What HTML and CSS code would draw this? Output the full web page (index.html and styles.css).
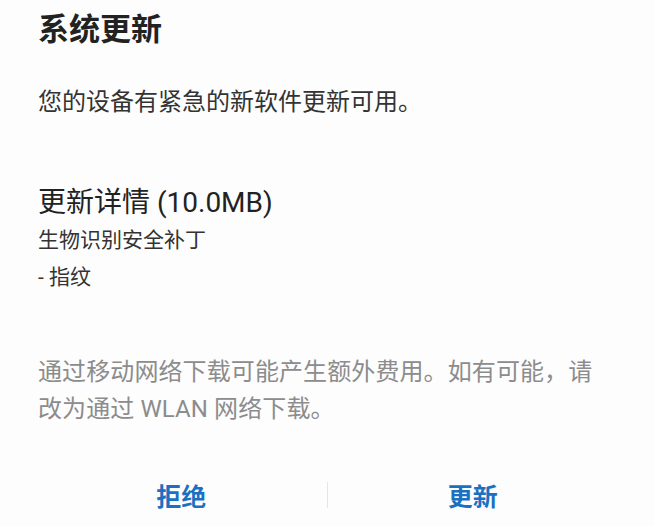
FILE: index.html
```html
<!DOCTYPE html>
<html lang="zh-CN">
<head>
  <meta charset="UTF-8">
  <title>系统更新</title>
  <link rel="stylesheet" href="styles.css">
</head>
<body>
  <div class="dialog">
    <h1 class="title">系统更新</h1>
    <p class="message">您的设备有紧急的新软件更新可用。</p>
    <h2 class="details">更新详情 (10.0MB)</h2>
    <div class="notes">
      <div>生物识别安全补丁</div>
      <div>- 指纹</div>
    </div>
    <p class="hint">通过移动网络下载可能产生额外费用。如有可能，请改为通过 WLAN 网络下载。</p>
    <div class="actions">
      <button class="btn">拒绝</button>
      <span class="sep"></span>
      <button class="btn">更新</button>
    </div>
  </div>
</body>
</html>
```

FILE: styles.css
```css
html, body { margin: 0; background: #fdfdfd; }
body { font-family: Roboto, "Noto Sans CJK SC", sans-serif; color: #333; }
.dialog { padding: 10px 48px 0 38px; }
.title { margin: 0; font-size: 31px; line-height: 40px; font-weight: 700; color: #222; }
.message { margin: 36px 0 0; font-size: 24px; line-height: 32px; color: #333; }
.details { margin: 67px 0 0; font-size: 28px; line-height: 36px; font-weight: 400; color: #222; }
.notes { margin-top: 1px; font-size: 21px; line-height: 37px; color: #333; }
.hint { margin: 58px 0 0; font-size: 24px; line-height: 37px; letter-spacing: 0.1px; color: #8c8c8c; }
.actions { display: flex; align-items: center; margin: 42px -12px 0 -2px; height: 50px; }
.btn { flex: 1; border: 0; background: none; padding: 0; font-family: inherit; font-size: 25px; font-weight: 700; color: #1a70c1; }
.sep { width: 1px; height: 26px; background: #e6e6e6; }
```
